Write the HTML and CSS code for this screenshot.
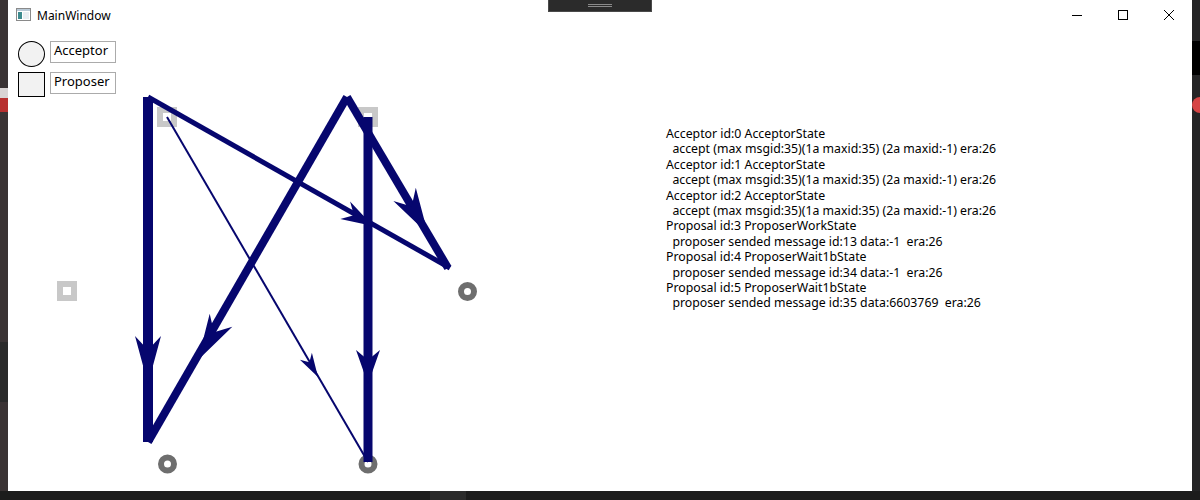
FILE: index.html
```html
<!DOCTYPE html>
<html>
<head>
<meta charset="utf-8">
<link rel="stylesheet" href="styles.css">
</head>
<body>
<div class="desk-left">
  <div class="dl-light"></div>
  <div class="dl-red"></div>
  <div class="dl-gray"></div>
</div>
<div class="window">
  <div class="titlebar">
    <svg class="appicon" width="15" height="13" viewBox="0 0 15 13">
      <rect x="0.5" y="0.5" width="14" height="12" fill="#fff" stroke="#8a8a8a"/>
      <rect x="1" y="1" width="13" height="2" fill="#b9c9d6"/>
      <rect x="2" y="4" width="4" height="7" fill="#3d8b8e"/>
      <rect x="7" y="4" width="6" height="7" fill="#e9eef2"/>
    </svg>
    <span class="title">MainWindow</span>
    <div class="controls">
      <div class="ctl"><svg width="10" height="10" viewBox="0 0 10 10"><path d="M0 5.5H10" stroke="#000" stroke-width="1"/></svg></div>
      <div class="ctl"><svg width="10" height="10" viewBox="0 0 10 10"><rect x="0.5" y="0.5" width="9" height="9" fill="none" stroke="#000" stroke-width="1"/></svg></div>
      <div class="ctl"><svg width="10" height="10" viewBox="0 0 10 10"><path d="M0 0L10 10M10 0L0 10" stroke="#000" stroke-width="1"/></svg></div>
    </div>
  </div>
  <div class="content">
    <div class="legend">
      <div class="shape circle"></div><div class="label">Acceptor</div>
      <div class="shape square"></div><div class="label">Proposer</div>
    </div>
    <div class="status">Acceptor id:0 AcceptorState
  accept (max msgid:35)(1a maxid:35) (2a maxid:-1) era:26
Acceptor id:1 AcceptorState
  accept (max msgid:35)(1a maxid:35) (2a maxid:-1) era:26
Acceptor id:2 AcceptorState
  accept (max msgid:35)(1a maxid:35) (2a maxid:-1) era:26
Proposal id:3 ProposerWorkState
  proposer sended message id:13 data:-1  era:26
Proposal id:4 ProposerWait1bState
  proposer sended message id:34 data:-1  era:26
Proposal id:5 ProposerWait1bState
  proposer sended message id:35 data:6603769  era:26</div>
  </div>
  <svg class="graph" width="1184" height="491" viewBox="8 0 1184 491">
    <!-- proposer nodes -->
    <g fill="#c8c8c8">
      <rect x="157" y="107" width="20" height="20"/>
      <rect x="358" y="107" width="20" height="20"/>
      <rect x="57" y="281" width="20" height="20"/>
    </g>
    <g fill="#fff">
      <rect x="163" y="113" width="8" height="8"/>
      <rect x="364" y="113" width="8" height="8"/>
      <rect x="63" y="287" width="8" height="8"/>
    </g>
    <!-- acceptor nodes -->
    <g fill="#fff" stroke="#6e6e6e" stroke-width="6">
      <circle cx="467.5" cy="291.5" r="6.5"/>
      <circle cx="167.5" cy="464" r="6.5"/>
      <circle cx="368" cy="464" r="6.5"/>
    </g>
    <!-- edges -->
    <g stroke="#06066e" stroke-linecap="butt" fill="none">
      <line x1="148" y1="97" x2="148" y2="442" stroke-width="10"/>
      <line x1="148" y1="97" x2="450" y2="268" stroke-width="5"/>
      <line x1="347" y1="97" x2="148" y2="442" stroke-width="8"/>
      <line x1="347" y1="97" x2="448" y2="268" stroke-width="8"/>
      <line x1="368" y1="117" x2="368" y2="462" stroke-width="9"/>
      <line x1="167" y1="117" x2="368" y2="462" stroke-width="2"/>
    </g>
    <g fill="#06066e">
      <polygon points="148,384 135,336 148,350 161,336"/>
      <polygon points="368,384 356,350 368,360 380,350"/>
      <polygon points="198,360 232.3,326.7 214,332.3 209.7,313.7"/>
      <polygon points="373,226 340.3,218.9 353.9,215.2 350.1,201.5"/>
      <polygon points="428,234 393.4,201 411.7,206.4 415.8,187.8"/>
      <polygon points="318,377 299.9,359.8 309.4,362.3 311.9,352.8"/>
    </g>
  </svg>
</div>
<div class="desk-right">
  <div class="dr-black"></div>
  <div class="dr-badge"></div>
</div>
<div class="desk-bottom"><div class="db-tab"></div></div>
<div class="snap-tab"><div class="grip"></div></div>
</body>
</html>
```
FILE: styles.css
```css
html, body {
  margin: 0;
  padding: 0;
}
body {
  width: 1200px;
  height: 500px;
  overflow: hidden;
  background: #1e1e1e;
  position: relative;
  display: grid;
  grid-template-columns: 8px 1184px 8px;
  grid-template-rows: 491px 9px;
  font-family: "Noto Sans", "Open Sans", sans-serif;
}
.desk-left {
  grid-column: 1;
  grid-row: 1;
  background: #3a3334;
  display: flex;
  flex-direction: column;
}
.dl-light { height: 10px; margin-top: 88px; background: #d9d4d4; }
.dl-red { height: 14px; background: #b8302f; }
.dl-gray { height: 60px; margin-top: 230px; background: #2a2a2a; }
.window {
  grid-column: 2;
  grid-row: 1;
  background: #fff;
  position: relative;
  display: flex;
  flex-direction: column;
}
.desk-right {
  grid-column: 3;
  grid-row: 1;
  background: #252526;
  display: flex;
  flex-direction: column;
}
.dr-black { height: 34px; margin-top: 41px; background: #000; }
.dr-badge { width: 16px; height: 16px; border-radius: 50%; background: #d64545; margin-top: 22px; }
.desk-bottom {
  grid-column: 1 / 4;
  grid-row: 2;
  background: #1c1c1c;
  display: flex;
}
.db-tab { width: 36px; margin-left: 430px; background: #2b2b2b; }
.snap-tab {
  position: absolute;
  left: 548px;
  top: 0;
  width: 102px;
  height: 11px;
  background: #2b2b2b;
  border: 1px solid #4a4a4a;
  border-top: none;
  display: flex;
  justify-content: center;
}
.grip {
  margin-top: 4px;
  width: 24px;
  height: 1px;
  border-top: 1px solid #8a8a8a;
  border-bottom: 1px solid #8a8a8a;
}
.titlebar {
  height: 31px;
  display: flex;
  align-items: center;
  padding-left: 8px;
  flex-shrink: 0;
}
.appicon { margin-top: -2px; }
.title {
  margin-left: 6px;
  font-size: 12px;
  color: #000;
  margin-top: -1px;
}
.controls {
  margin-left: auto;
  display: flex;
  align-self: stretch;
}
.ctl {
  width: 46px;
  display: flex;
  align-items: center;
  justify-content: center;
  margin-top: -2px;
}
.content {
  flex: 1;
  display: flex;
  align-items: flex-start;
}
.legend {
  margin-left: 10px;
  margin-top: 10px;
  display: grid;
  grid-template-columns: 27px 66px;
  grid-template-rows: 26px 25px;
  column-gap: 5px;
  row-gap: 5px;
}
.shape { box-sizing: border-box; border: 1px solid #000; background: #f2f2f2; }
.circle { border-radius: 50%; }
.label {
  box-sizing: border-box;
  border: 1px solid #ababab;
  height: 22px;
  font-size: 13px;
  line-height: 17px;
  padding-left: 3px;
  color: #000;
}
.status {
  margin-left: 550px;
  margin-top: 95px;
  white-space: pre;
  font-size: 12.3px;
  line-height: 15.4px;
  color: #000;
}
.graph {
  position: absolute;
  left: 0;
  top: 0;
}
```
